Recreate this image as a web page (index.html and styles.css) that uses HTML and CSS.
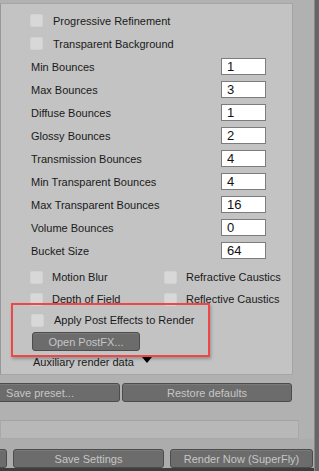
FILE: index.html
```html
<!DOCTYPE html>
<html lang="en">
<head>
    <meta charset="UTF-8">
    <title>Render Settings</title>
    <link rel="stylesheet" href="styles.css">
</head>
<body>
<div class="screen">
    <div class="main">
        <!-- render settings panel -->
        <div class="panel">
            <div class="check-row"><span class="cb"></span><span>Progressive Refinement</span></div>
            <div class="check-row"><span class="cb"></span><span>Transparent Background</span></div>

            <div class="num-row"><span>Min Bounces</span><span class="num">1</span></div>
            <div class="num-row"><span>Max Bounces</span><span class="num">3</span></div>
            <div class="num-row"><span>Diffuse Bounces</span><span class="num">1</span></div>
            <div class="num-row"><span>Glossy Bounces</span><span class="num">2</span></div>
            <div class="num-row"><span>Transmission Bounces</span><span class="num">4</span></div>
            <div class="num-row"><span>Min Transparent Bounces</span><span class="num">4</span></div>
            <div class="num-row"><span>Max Transparent Bounces</span><span class="num">16</span></div>
            <div class="num-row"><span>Volume Bounces</span><span class="num">0</span></div>
            <div class="num-row"><span>Bucket Size</span><span class="num">64</span></div>

            <div class="check-grid">
                <div class="check-item"><span class="cb"></span><span>Motion Blur</span></div>
                <div class="check-item"><span class="cb"></span><span>Refractive Caustics</span></div>
                <div class="check-item"><span class="cb"></span><span>Depth of Field</span></div>
                <div class="check-item"><span class="cb"></span><span>Reflective Caustics</span></div>
            </div>

            <div class="apply-row"><span class="cb"></span><span>Apply Post Effects to Render</span></div>
            <div class="postfx-row"><span class="btn postfx">Open PostFX...</span></div>
            <div class="aux-row"><span>Auxiliary render data</span><span class="tri"></span></div>

            <!-- red highlight frame -->
            <div class="highlight"></div>
        </div>

        <div class="preset-row">
            <span class="btn save-preset">Save preset...</span>
            <span class="btn restore">Restore defaults</span>
        </div>

        <div class="field"></div>

        <div class="bottom">
            <div class="bottom-row">
                <span class="btn cut"></span>
                <span class="btn save-settings">Save Settings</span>
                <span class="btn render-now">Render Now (SuperFly)</span>
            </div>
        </div>
    </div>
    <div class="edge"></div>
</div>
</body>
</html>
```

FILE: styles.css
```css
html, body {
    margin: 0;
    padding: 0;
}

body {
    width: 319px;
    height: 471px;
    overflow: hidden;
    background-color: #b1b1b1;
    font-family: "Liberation Sans", Arial, sans-serif;
    font-size: 11px;
    color: #1a1a1a;
}

.screen {
    display: grid;
    grid-template-columns: 314px 5px;
    height: 471px;
}

.main {
    display: flex;
    flex-direction: column;
    overflow: hidden;
}

/* panel */
.panel {
    position: relative;
    box-sizing: border-box;
    width: 293px;
    height: 372px;
    margin-top: 3px;
    padding-top: 5px;
    background-color: #c3c3c3;
    border-top: 1px solid #a6a6a6;
    border-right: 1px solid #a3a3a3;
    border-bottom: 1px solid #a6a6a6;
    border-left: 1px solid #979797;
}

.cb {
    flex: none;
    width: 13px;
    height: 13px;
    box-sizing: border-box;
    background-color: #d8d8d8;
    border: 1px solid #d2d2d2;
    border-radius: 2px;
}

.check-row {
    display: flex;
    align-items: center;
    gap: 10px;
    height: 23px;
    padding-left: 29px;
}

/* number rows */
.num-row {
    display: flex;
    align-items: center;
    justify-content: space-between;
    height: 23px;
    padding: 0 26px 0 30px;
}

.num {
    box-sizing: border-box;
    width: 45px;
    height: 17px;
    padding-left: 5px;
    background-color: #fff;
    border: 1px solid #7c7c7c;
    font-size: 13px;
    line-height: 15px;
    color: #111;
}

.check-grid {
    display: grid;
    grid-template-columns: 134px 1fr;
    grid-auto-rows: 22px;
    margin-top: 4px;
    padding-left: 29px;
}

.check-item {
    display: flex;
    align-items: center;
    gap: 9px;
}

.apply-row {
    display: flex;
    align-items: center;
    gap: 10px;
    height: 20px;
    padding-left: 30px;
}

.postfx-row {
    margin-top: 2px;
    padding-left: 31px;
}

.aux-row {
    display: flex;
    align-items: flex-start;
    gap: 8px;
    height: 22px;
    padding-left: 32px;
    line-height: 22px;
}

.tri {
    margin-top: 6px;
    width: 0;
    height: 0;
    border-left: 5px solid transparent;
    border-right: 5px solid transparent;
    border-top: 6px solid #000;
}

.highlight {
    position: absolute;
    left: 10px;
    top: 299px;
    width: 199px;
    height: 54px;
    box-sizing: border-box;
    border: 2px solid #ee4747;
    box-shadow: 1px 2px 3px rgba(0, 0, 0, 0.25);
}

/* dark buttons */
.btn {
    display: flex;
    align-items: center;
    justify-content: center;
    box-sizing: border-box;
    height: 19px;
    background-color: #6c6c6c;
    border: 1px solid #4c4c4c;
    border-radius: 3px;
    box-shadow: inset 0 1px 0 #7a7a7a;
    color: #c6c6c6;
    font-size: 11px;
    white-space: nowrap;
}

.postfx {
    width: 108px;
}

.preset-row {
    display: flex;
    gap: 2px;
    margin: 8px 0 0 -40px;
}

.save-preset {
    flex: none;
    width: 160px;
}

.restore {
    flex: none;
    width: 170px;
}

.field {
    box-sizing: border-box;
    width: 299px;
    height: 19px;
    margin-top: 18px;
    background-color: #b8b8b8;
    border: 1px solid #a9a9a9;
    border-top-color: #a2a2a2;
}

.bottom {
    flex: 1;
    padding-top: 10px;
    background-color: #acacac;
    border-bottom: 3px solid #3e3e3e;
}

.bottom-row {
    display: flex;
    gap: 6px;
    margin-left: -50px;
}

.cut {
    flex: none;
    width: 57px;
}

.save-settings {
    flex: none;
    width: 151px;
}

.render-now {
    flex: none;
    width: 143px;
}

.edge {
    background-color: #666;
    border-left: 1px solid #8a8a8a;
}
```
